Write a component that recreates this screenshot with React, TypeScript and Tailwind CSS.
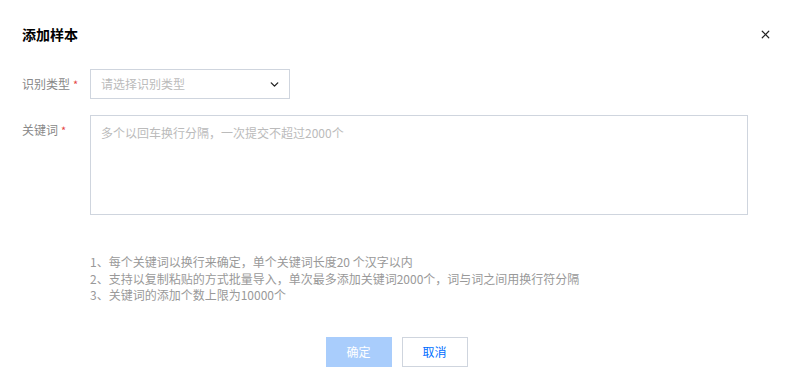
import { ChevronDown, X } from "lucide-react";

export default function App() {
  return (
    <div
      className="w-[791px] h-[385px] bg-white overflow-hidden"
      style={{ fontFamily: '"Noto Sans CJK SC", "Noto Sans", sans-serif' }}
    >
      {/* Header */}
      <div className="flex items-center justify-between pt-[24px] pl-[22px] pr-[19px]">
        <h2 className="text-[14px] leading-[20px] font-bold text-[#000]">添加样本</h2>
        <X className="w-[13px] h-[13px] text-[#222]" strokeWidth={2.2} />
      </div>

      {/* Form */}
      <div className="px-[22px] mt-[25px]">
        <div className="flex items-center">
          <label className="w-[68px] text-[12px] text-[#888]">
            识别类型<span className="text-[#e54545] text-[11px] ml-[3px]">*</span>
          </label>
          <div className="w-[200px] h-[30px] border border-[#cfd5de] flex items-center justify-between pl-[10px] pr-[8px]">
            <span className="text-[12px] text-[#bbb]">请选择识别类型</span>
            <ChevronDown className="w-[13px] h-[13px] text-[#222]" strokeWidth={2.5} />
          </div>
        </div>

        <div className="flex items-start mt-[16px]">
          <label className="w-[68px] text-[12px] text-[#888] pt-[6px]">
            关键词<span className="text-[#e54545] text-[11px] ml-[3px]">*</span>
          </label>
          <div className="w-[658px] h-[100px] border border-[#cfd5de] px-[10px] pt-[3px]">
            <span className="text-[12px] text-[#bbb]">多个以回车换行分隔，一次提交不超过2000个</span>
          </div>
        </div>

        <div className="ml-[68px] mt-[39px] text-[12px] leading-[16.5px] text-[#999]">
          <p>1、每个关键词以换行来确定，单个关键词长度20 个汉字以内</p>
          <p>2、支持以复制粘贴的方式批量导入，单次最多添加关键词2000个，词与词之间用换行符分隔</p>
          <p>3、关键词的添加个数上限为10000个</p>
        </div>
      </div>

      {/* Footer */}
      <div className="flex justify-center gap-[10px] mt-[33px] pl-[2px]">
        <button className="w-[66px] h-[30px] bg-[#a9cdfc] text-white text-[12px]">确定</button>
        <button className="w-[66px] h-[30px] border border-[#cfd5de] text-[#006eff] text-[12px] bg-white">取消</button>
      </div>
    </div>
  );
}
